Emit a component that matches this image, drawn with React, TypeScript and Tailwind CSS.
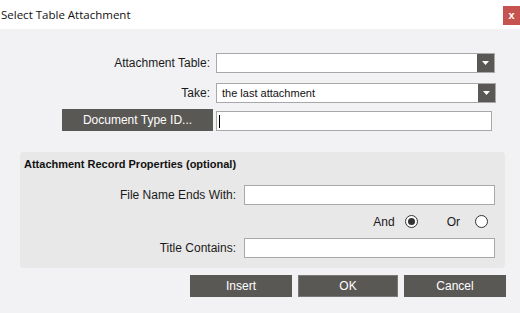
import { useState } from 'react';

function Caret() {
  return (
    <svg width="7" height="4" viewBox="0 0 7 4" className="block">
      <path d="M0 0h7L3.5 4z" fill="#ffffff" />
    </svg>
  );
}

function Combo({ value }: { value?: string }) {
  return (
    <div className="flex h-[20px] flex-1 border border-[#a8a8a8] bg-white">
      <div className="flex flex-1 items-center pl-[5px] text-[11px] text-[#111]">{value}</div>
      <div className="flex w-[17px] items-center justify-center bg-[#5a5855]">
        <Caret />
      </div>
    </div>
  );
}

function Radio({ checked }: { checked?: boolean }) {
  return (
    <span className="flex h-[13px] w-[13px] items-center justify-center rounded-full border border-[#333] bg-white">
      {checked && <span className="h-[7px] w-[7px] rounded-full bg-[#333]" />}
    </span>
  );
}

export default function App() {
  const [mode, setMode] = useState<'and' | 'or'>('and');

  return (
    <div
      className="flex h-[313px] w-[520px] flex-col bg-[#f2f2f4] text-[12px] text-[#1a1a1a]"
      style={{ fontFamily: '"Liberation Sans", Arial, sans-serif' }}
    >
      {/* Title bar */}
      <div className="flex h-[29px] items-start justify-between bg-white">
        <span
          className="mt-[6px] pl-[1px] text-[11.5px] text-[#111]"
          style={{ fontFamily: '"Open Sans", "Noto Sans", sans-serif' }}
        >
          Select Table Attachment
        </span>
        <button
          type="button"
          className="mt-[6px] flex h-[19px] w-[17px] items-center justify-center bg-[#c75351] text-[11px] font-bold leading-none text-white"
        >
          x
        </button>
      </div>

      {/* Top fields */}
      <div className="mt-[24px] flex flex-col">
        <div className="flex items-center pr-[25px]">
          <label className="w-[210px] text-right">Attachment Table:</label>
          <div className="ml-[6px] flex flex-1">
            <Combo />
          </div>
        </div>
        <div className="mt-[10px] flex items-center pr-[24px]">
          <label className="w-[210px] text-right">Take:</label>
          <div className="ml-[6px] flex flex-1">
            <Combo value="the last attachment" />
          </div>
        </div>
        <div className="mt-[6px] flex items-end pr-[28px]">
          <button
            type="button"
            className="ml-[62px] h-[22px] w-[151px] bg-[#5a5855] text-[12px] text-white"
          >
            Document Type ID...
          </button>
          <div className="ml-[3px] flex h-[20px] flex-1 items-center border border-[#a8a8a8] bg-white pl-[2px]">
            <span className="h-[13px] w-[1px] bg-black" />
          </div>
        </div>
      </div>

      {/* Group */}
      <div className="ml-[20px] mt-[21px] flex h-[116px] w-[485px] flex-col rounded-[4px] bg-[#e8e8e8] px-[4px]">
        <div className="mt-[4px] text-[11px] font-bold text-[#111]">
          Attachment Record Properties (optional)
        </div>
        <div className="mt-[12px] flex items-center pr-[6px]">
          <label className="w-[212px] text-right">File Name Ends With:</label>
          <input className="ml-[8px] h-[20px] flex-1 border border-[#a8a8a8] bg-white outline-none" />
        </div>
        <div className="mt-[10px] flex h-[14px] items-center justify-end pr-[13px]">
          <label className="flex items-center" onClick={() => setMode('and')}>
            <span>And</span>
            <span className="ml-[10px]">
              <Radio checked={mode === 'and'} />
            </span>
          </label>
          <label className="ml-[29px] flex items-center" onClick={() => setMode('or')}>
            <span>Or</span>
            <span className="ml-[15px]">
              <Radio checked={mode === 'or'} />
            </span>
          </label>
        </div>
        <div className="mt-[9px] flex items-center pr-[6px]">
          <label className="w-[212px] text-right">Title Contains:</label>
          <input className="ml-[8px] h-[20px] flex-1 border border-[#a8a8a8] bg-white outline-none" />
        </div>
      </div>

      {/* Footer buttons */}
      <div className="mt-[7px] flex justify-end gap-[6px] pr-[14px]">
        <button type="button" className="h-[22px] w-[102px] bg-[#5a5855] text-[12px] text-white">
          Insert
        </button>
        <button
          type="button"
          className="h-[22px] w-[100px] border border-[#7a7876] bg-[#5a5855] text-[12px] text-white"
        >
          OK
        </button>
        <button type="button" className="h-[22px] w-[102px] bg-[#5a5855] text-[12px] text-white">
          Cancel
        </button>
      </div>
    </div>
  );
}
